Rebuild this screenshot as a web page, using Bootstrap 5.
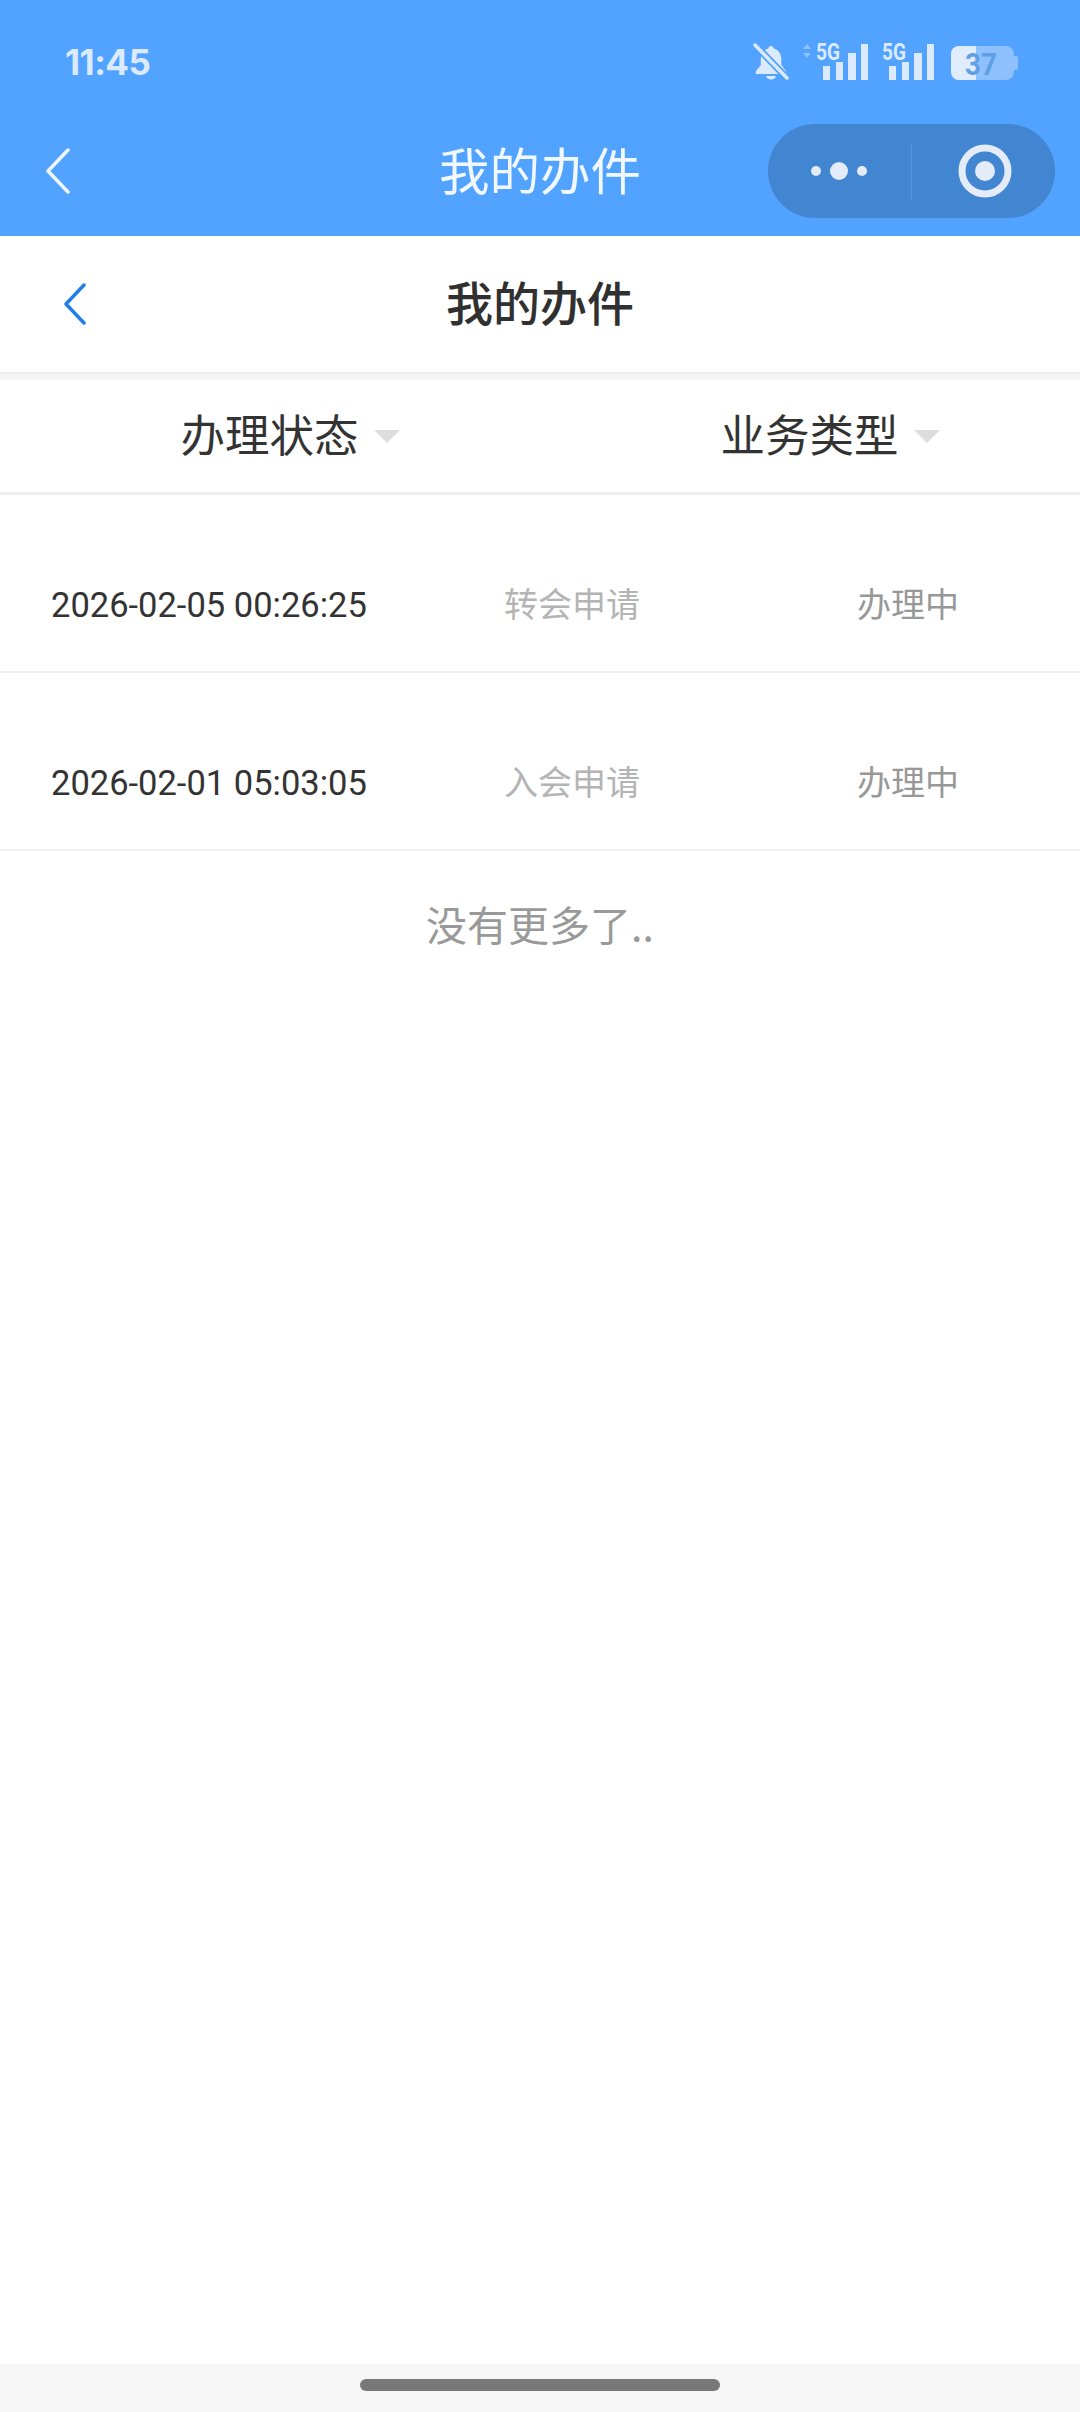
<!DOCTYPE html>
<html lang="zh-CN">
<head>
    <meta charset="UTF-8">
    <meta name="viewport" content="width=device-width, initial-scale=1.0">
    <title>我的办件</title>
    <link rel="stylesheet" href="https://cdn.jsdelivr.net/npm/bootstrap@5.3.0/dist/css/bootstrap.min.css">
    <style>
        body { font-family: Roboto, "Noto Sans CJK SC", sans-serif; background: #fff; min-height: 2412px; }
        .app-top { background: #52a3ff; height: 236px; }
        .status-row { height: 124px; padding: 43px 61px 0 65px; }
        .clock { font-family: Inter, Roboto, sans-serif; font-weight: 700; font-size: 35px; line-height: 38px; color: #dbeafe; letter-spacing: -.5px; }
        .wx-nav { height: 112px; display: grid; grid-template-columns: 1fr auto 1fr; padding: 0 25px 18px; }
        .wx-back { margin-left: 21px; }
        .wx-title { font-size: 50.5px; line-height: 88px; color: #f2f8ff; font-family: "Noto Sans CJK SC", sans-serif; }
        .capsule { justify-self: end; width: 287px; height: 94px; border-radius: 47px; background: #4285d0; }
        .page-head { height: 136px; padding: 0 64px; display: grid; grid-template-columns: 1fr auto 1fr; }
        .page-title { font-size: 47px; font-weight: 500; line-height: 60px; padding-bottom: 6px; color: #303030; font-family: "Noto Sans CJK SC", sans-serif; }
        .gap-strip { height: 8px; background: #f5f5f5; border-top: 2px solid #eeeeee; }
        .filter-row { height: 115px; border-bottom: 3px solid #eeeeee; }
        .filter-cell { flex: 0 0 50%; padding-left: 40px; gap: 15px; font-size: 44.5px; color: #333; font-family: "Noto Sans CJK SC", sans-serif; }
        .filter-cell span:first-child { line-height: 60px; padding-bottom: 6px; }
        .caret-down { width: 0; height: 0; border-left: 13px solid transparent; border-right: 13px solid transparent; border-top: 13px solid #dddddd; }
        .job-row { height: 178px; padding-top: 88px; border-bottom: 2px solid #f1f1f1; font-size: 34px; line-height: 44px; }
        .job-time { flex: 0 0 404px; padding-left: 51px; color: #333; font-size: 34.5px; white-space: nowrap; }
        .job-type { flex: 0 0 336px; color: #b4b4b4; text-align: center; }
        .job-state { flex: 0 0 336px; color: #989898; text-align: center; }
        .no-more { font-size: 41px; line-height: 50px; color: #999; padding-top: 47px; font-family: "Noto Sans CJK SC", sans-serif; }
        .home-bar { height: 48px; background: #f6f6f6; padding-top: 15px; }
        .home-pill { width: 360px; height: 12px; border-radius: 6px; background: #787878; }
    </style>
</head>
<body class="d-flex flex-column">

    <div class="app-top">
        <div class="status-row d-flex justify-content-between align-items-start">
            <span class="clock">11:45</span>
            <svg width="266" height="40" viewBox="753 43 266 40">
                <!-- muted bell -->
                <path d="M771 46c-1.500 0-2.500 1-2.800 2.600-5 1.600-7.400 5.500-7.400 11v5.500l-5 6.400v2.500h30.500v-2.500l-5-6.400v-5.500c0-5.500-2.500-9.400-7.500-11-.3-1.600-1.300-2.600-2.800-2.600z" fill="#dbeafe"/>
                <path d="M766 76h10c-.5 2.500-2.500 3.500-5 3.500s-4.500-1-5-3.500z" fill="#dbeafe"/>
                <path d="M755 45l32 33" stroke="#52a3ff" stroke-width="7"/>
                <path d="M755 45l32 33" stroke="#dbeafe" stroke-width="3.500" stroke-linecap="round"/>
                <!-- data arrows -->
                <path d="M807 44l4 5h-8zM807 58l4-5h-8z" fill="#8fc2fb"/>
                <!-- sim 1 -->
                <text x="816" y="60" font-family="Roboto, sans-serif" font-weight="700" font-size="23" textLength="24" lengthAdjust="spacingAndGlyphs" fill="#dbeafe">5G</text>
                <rect x="823" y="66" width="7" height="14" fill="#dbeafe"/>
                <rect x="836" y="62" width="7" height="18" fill="#dbeafe"/>
                <rect x="848" y="53" width="8" height="27" fill="#dbeafe"/>
                <rect x="861" y="44" width="7" height="36" fill="#dbeafe"/>
                <!-- sim 2 -->
                <text x="882" y="60" font-family="Roboto, sans-serif" font-weight="700" font-size="23" textLength="24" lengthAdjust="spacingAndGlyphs" fill="#dbeafe">5G</text>
                <rect x="889" y="66" width="7" height="14" fill="#dbeafe"/>
                <rect x="902" y="62" width="7" height="18" fill="#dbeafe"/>
                <rect x="914" y="53" width="8" height="27" fill="#dbeafe"/>
                <rect x="927" y="44" width="7" height="36" fill="#dbeafe"/>
                <!-- battery -->
                <rect x="951" y="46" width="63" height="34" rx="8" fill="#8dc0fd"/>
                <path d="M1014 56h2a2 2 0 0 1 2 2v10a2 2 0 0 1-2 2h-2z" fill="#8dc0fd"/>
                <path d="M959 46h17v34h-17a8 8 0 0 1-8-8v-18a8 8 0 0 1 8-8z" fill="#dfecfb"/>
                <text x="965" y="75" font-family="Roboto, sans-serif" font-weight="700" font-size="31" textLength="32" lengthAdjust="spacingAndGlyphs" fill="#5f9fe6">37</text>
            </svg>
        </div>
        <div class="wx-nav">
            <svg class="wx-back align-self-center" width="24" height="46" viewBox="0 0 24 46">
                <path d="M22 2L2 23l20 21" fill="none" stroke="#eef5ff" stroke-width="3.500" stroke-linecap="round" stroke-linejoin="round"/>
            </svg>
            <div class="wx-title">我的办件</div>
            <div class="capsule">
                <svg width="287" height="94" viewBox="0 0 287 94">
                    <circle cx="48" cy="47" r="5" fill="#e3ecf8"/>
                    <circle cx="71" cy="47" r="9" fill="#e3ecf8"/>
                    <circle cx="94" cy="47" r="5" fill="#e3ecf8"/>
                    <rect x="143" y="20" width="1" height="56" fill="#5a95d8"/>
                    <circle cx="217" cy="47" r="23" fill="none" stroke="#e3ecf8" stroke-width="7"/>
                    <circle cx="217" cy="47" r="10" fill="#e3ecf8"/>
                </svg>
            </div>
        </div>
    </div>

    <div class="page-head align-items-center">
        <svg width="22" height="42" viewBox="0 0 22 42">
            <path d="M20 2L2 21l18 19" fill="none" stroke="#1f80e6" stroke-width="3.500" stroke-linecap="round" stroke-linejoin="round"/>
        </svg>
        <div class="page-title">我的办件</div>
    </div>
    <div class="gap-strip"></div>

    <div class="filter-row d-flex">
        <div class="filter-cell d-flex justify-content-center align-items-center">
            <span>办理状态</span><span class="caret-down"></span>
        </div>
        <div class="filter-cell d-flex justify-content-center align-items-center">
            <span>业务类型</span><span class="caret-down"></span>
        </div>
    </div>

    <div class="flex-grow-1">
        <div class="job-row d-flex">
            <div class="job-time">2026-02-05 00:26:25</div>
            <div class="job-type">转会申请</div>
            <div class="job-state">办理中</div>
        </div>
        <div class="job-row d-flex">
            <div class="job-time">2026-02-01 05:03:05</div>
            <div class="job-type">入会申请</div>
            <div class="job-state">办理中</div>
        </div>
        <div class="no-more text-center">没有更多了..</div>
    </div>

    <div class="home-bar">
        <div class="home-pill mx-auto"></div>
    </div>

    <script src="https://cdn.jsdelivr.net/npm/bootstrap@5.3.0/dist/js/bootstrap.bundle.min.js"></script>
</body>
</html>
